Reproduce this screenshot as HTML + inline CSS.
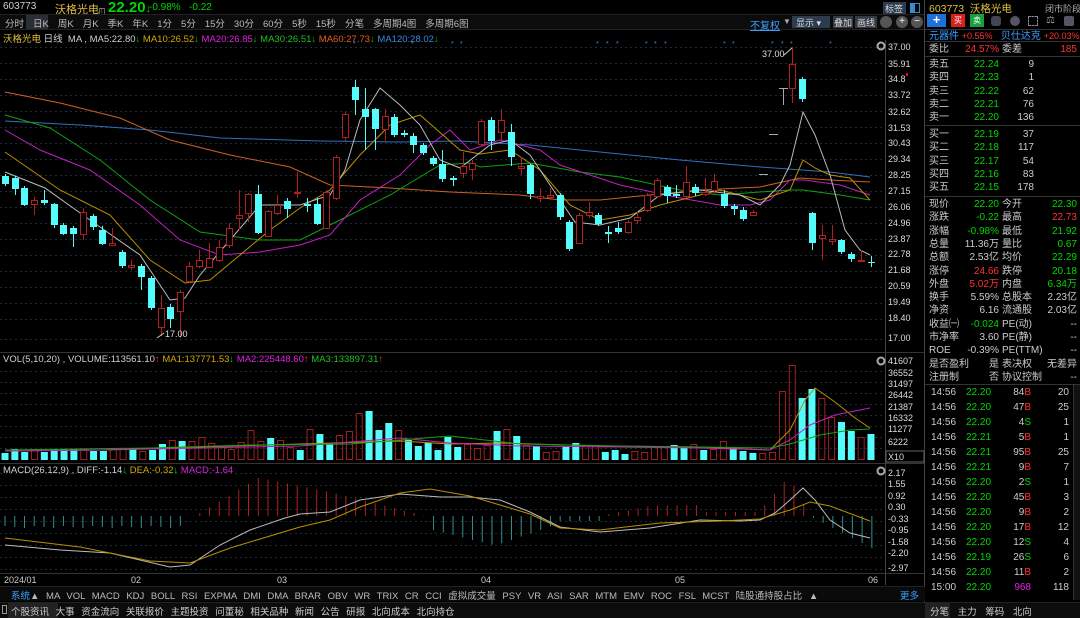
<!DOCTYPE html><html><head><meta charset="utf-8"><style>
*{margin:0;padding:0;box-sizing:border-box}
body{width:1080px;height:618px;background:#000;color:#c8c8c8;font-family:"Liberation Sans","Noto Sans CJK SC",sans-serif;font-size:10px;position:relative;overflow:hidden}
.a{position:absolute;white-space:nowrap}
.g{color:#00d600}.r{color:#ff3232}.y{color:#e0c040}.w{color:#d0d0d0}
.tab span{margin-right:9px}
.rp div.row{position:absolute;left:929px;width:148px;height:13px;font-size:10px;line-height:13px}
.rp .row b{font-weight:normal;position:absolute;top:0;line-height:13px}
</style></head><body>
<div class="a" style="left:0;top:0;width:925px;height:14px;background:#000"></div>
<div class="a w" style="left:3px;top:1px;font-size:10px">603773</div>
<div class="a y" style="left:55px;top:1px;font-size:11px">沃格光电<span style="font-size:6px;color:#888;border:1px solid #666">T</span></div>
<div class="a g" style="left:108px;top:-1px;font-size:15px;font-weight:bold">22.20<span style="font-size:11px">↓</span></div>
<div class="a g" style="left:149px;top:2px;font-size:10px">-0.98%&nbsp;&nbsp;&nbsp;-0.22</div>
<div class="a" style="left:0;top:14px;width:925px;height:16px;background:#0c0c0c;border-top:1px solid #222;border-bottom:1px solid #222"></div>
<div class="a" style="left:26px;top:15px;width:22px;height:14px;background:#2a2e36"></div>
<div class="a tab" style="left:5px;top:16px;font-size:9.5px;color:#bbb;word-spacing:0"><span>分时</span><span>日K</span><span>周K</span><span>月K</span><span>季K</span><span>年K</span><span>1分</span><span>5分</span><span>15分</span><span>30分</span><span>60分</span><span>5秒</span><span>15秒</span><span>分笔</span><span>多周期4图</span><span>多周期6图</span></div>
<div class="a" style="left:750px;top:17px;color:#3aa0ff;text-decoration:underline;font-size:10px">不复权</div>
<div class="a" style="left:783px;top:17px;color:#aaa;font-size:8px">▼</div>
<div class="a" style="left:792px;top:16px;width:38px;height:12px;background:#2d3b4f;color:#ddd;font-size:9px;padding-left:4px">显示 ▾</div>
<div class="a" style="left:833px;top:16px;width:20px;height:12px;background:#333a44;color:#ddd;font-size:9px;padding-left:1px">叠加</div>
<div class="a" style="left:855px;top:16px;width:22px;height:12px;background:#333a44;color:#ddd;font-size:9px;padding-left:2px">画线</div>
<div class="a" style="left:880px;top:16px;width:12px;height:12px;border-radius:6px;background:#555"></div>
<div class="a" style="left:896px;top:16px;width:12px;height:12px;border-radius:6px;background:#555;color:#fff;text-align:center;line-height:12px">+</div>
<div class="a" style="left:911px;top:16px;width:12px;height:12px;border-radius:6px;background:#555;color:#fff;text-align:center;line-height:11px">−</div>
<div class="a" style="left:883px;top:2px;width:23px;height:12px;background:#2d3b4f;color:#ddd;font-size:9px;padding-left:2px">标签</div>
<div class="a" style="left:910px;top:3px;width:10px;height:10px;border:1px solid #3a8ad0;border-left:5px solid #3a8ad0"></div>
<div class="a" style="left:3px;top:31px;font-size:9.5px"><span class="y">沃格光电</span> <span class="w">日线&nbsp; MA , MA5:22.80</span><span class="g">↓</span> <span style="color:#d4a800">MA10:26.52</span><span class="g">↓</span> <span style="color:#e020e0">MA20:26.85</span><span class="g">↓</span> <span style="color:#20c020">MA30:26.51</span><span class="g">↓</span> <span style="color:#e06020">MA60:27.73</span><span class="g">↓</span> <span style="color:#3a8ae0">MA120:28.02</span><span class="g">↓</span></div>
<div class="a" style="left:3px;top:354px;font-size:9.5px"><span class="w">VOL(5,10,20) , VOLUME:113561.10</span><span class="r">↑</span> <span style="color:#d4a800">MA1:137771.53</span><span class="g">↓</span> <span style="color:#e020e0">MA2:225448.60</span><span class="r">↑</span> <span style="color:#20c020">MA3:133897.31</span><span class="r">↑</span></div>
<div class="a" style="left:3px;top:465px;font-size:9.5px"><span class="w">MACD(26,12,9) , DIFF:-1.14</span><span class="g">↓</span> <span style="color:#d4a800">DEA:-0.32</span><span class="g">↓</span> <span style="color:#e020e0">MACD:-1.64</span></div>
<svg class="a" style="left:0;top:0" width="925" height="618" id="sv">
<g stroke="#1e2a3a" stroke-dasharray="2,3" stroke-width="1" id="grid"></g>
<line x1="0" y1="352.5" x2="925" y2="352.5" stroke="#333"/>
<line x1="0" y1="463.5" x2="925" y2="463.5" stroke="#333"/>
<line x1="0" y1="573.5" x2="925" y2="573.5" stroke="#333"/>
<line x1="885.5" y1="40" x2="885.5" y2="585" stroke="#444"/>
<line x1="924.5" y1="0" x2="924.5" y2="618" stroke="#444"/>
<g id="ma" fill="none" stroke-width="1"></g>
<g id="cd"></g>
<g id="vol"></g>
<g id="mc"></g>
<text x="165" y="337" fill="#ddd" font-size="9">17.00</text>
<polyline points="157,338 164,333" stroke="#ccc" fill="none"/>
<text x="762" y="57" fill="#ddd" font-size="9">37.00</text>
<polyline points="784,55 792,48" stroke="#ccc" fill="none"/>
<g fill="#ddd" font-size="9" id="ax"></g>
<g fill="#ccc" font-size="9"><text x="4" y="583">2024/01</text><text x="131" y="583">02</text><text x="277" y="583">03</text><text x="481" y="583">04</text><text x="675" y="583">05</text><text x="868" y="583">06</text></g>
<rect x="886" y="451" width="38" height="11" fill="none" stroke="#666"/><text x="888" y="460" fill="#ddd" font-size="9">X10</text>
<circle cx="881" cy="46" r="3.5" fill="none" stroke="#aaa" stroke-width="2"/><circle cx="881" cy="361" r="3.5" fill="none" stroke="#aaa" stroke-width="2"/><circle cx="881" cy="471" r="3.5" fill="none" stroke="#aaa" stroke-width="2"/>
<g fill="#3a8ae0" font-size="7" id="stars"></g>
</svg>
<div class="a" style="left:0;top:586px;width:925px;height:15px;background:#0a0a0a;border-top:1px solid #222"></div>
<div class="a" style="left:11px;top:588px;font-size:9.5px;color:#bbb;word-spacing:4px"><span style="color:#3aa0ff">系统</span>▲ MA VOL MACD KDJ BOLL RSI EXPMA DMI DMA BRAR OBV WR TRIX CR CCI 虚拟成交量 PSY VR ASI SAR MTM EMV ROC FSL MCST 陆股通持股占比 ▲</div>
<div class="a" style="left:900px;top:588px;color:#3aa0ff;font-size:9.5px">更多</div>
<div class="a" style="left:0;top:602px;width:1080px;height:16px;background:#0c0c0c;border-top:1px solid #222"></div>
<div class="a" style="left:8px;top:602px;width:50px;height:16px;background:#222"></div>
<div class="a" style="left:2px;top:605px;width:5px;height:9px;border:1px solid #999"></div>
<div class="a" style="left:11px;top:604px;font-size:9.5px;color:#ccc;word-spacing:4px">个股资讯 大事 资金流向 关联报价 主题投资 问董秘 相关品种 新闻 公告 研报 北向成本 北向持仓</div>
<div class="a" style="left:925px;top:602px;width:25px;height:16px;background:#222"></div>
<div class="a" style="left:930px;top:604px;font-size:9.5px;color:#ccc;word-spacing:6px">分笔 主力 筹码 北向</div>
<div class="a y" style="left:929px;top:1px;font-size:10.5px">603773&nbsp; 沃格光电</div>
<div class="a" style="left:1045px;top:2px;font-size:9px;color:#aaa">闭市阶段</div>
<div class="a" style="left:927px;top:14px;width:19px;height:13px;background:#1f6fd8;color:#fff;text-align:center;font-size:13px;line-height:12px;font-weight:bold">+</div>
<div class="a" style="left:951px;top:14px;width:14px;height:13px;background:#d82020;color:#fff;font-size:8px;text-align:center;line-height:13px">买</div>
<div class="a" style="left:970px;top:14px;width:14px;height:13px;background:#18a040;color:#fff;font-size:8px;text-align:center;line-height:13px">卖</div>
<div class="a" style="left:991px;top:16px;width:10px;height:10px;background:#445;border-radius:3px"></div>
<div class="a" style="left:1010px;top:16px;width:10px;height:10px;background:#556;border-radius:5px"></div>
<div class="a" style="left:1028px;top:16px;width:10px;height:10px;border:1px dashed #889"></div>
<div class="a" style="left:1046px;top:15px;color:#99a;font-size:10px">⚖</div>
<div class="a" style="left:1064px;top:16px;width:10px;height:10px;background:#556;border-radius:2px"></div>
<div class="a" style="left:925px;top:29px;width:155px;height:1px;background:#333"></div>
<div class="a" style="left:929px;top:31px;font-size:10px;line-height:11px"><span style="color:#3aa0ff">元器件</span> <span class="r" style="font-size:9px">+0.55%</span>&nbsp;&nbsp; <span style="color:#3aa0ff">贝仕达克</span> <span class="r" style="font-size:9px">+20.03%</span></div>
<div class="a" style="left:925px;top:41px;width:155px;height:1px;background:#333"></div>
<div class="a" style="left:925px;top:56px;width:155px;height:1px;background:#333"></div>
<div class="a" style="left:925px;top:125px;width:155px;height:1px;background:#333"></div>
<div class="a" style="left:925px;top:196px;width:155px;height:1px;background:#333"></div>
<div class="a" style="left:925px;top:384px;width:155px;height:1px;background:#333"></div>
<div class="a" style="left:1073px;top:385px;width:7px;height:215px;background:#111;border-left:1px solid #333"></div>
<div class="rp" id="rp"></div>
<script>
var NS="http://www.w3.org/2000/svg";
function el(p,t,a){var e=document.createElementNS(NS,t);for(var k in a)e.setAttribute(k,a[k]);document.getElementById(p).appendChild(e);return e}
[47,63,79,95,111,127,143,159,175,191,207,223,239,255,271,287,303,319,339].forEach(function(y){el('grid','line',{x1:0,x2:885,y1:y+.5,y2:y+.5})});
[371,382,393,404,415,426,437,448].forEach(function(y){el('grid','line',{x1:0,x2:885,y1:y+.5,y2:y+.5})});
[473,485,497,509,521,533,545,557,569].forEach(function(y){el('grid','line',{x1:0,x2:885,y1:y+.5,y2:y+.5})});
var ax=[["37.00",50],["35.91",67],["34.8",82],["33.72",98],["32.62",115],["31.53",131],["30.43",146],["29.34",162],["28.25",178],["27.15",194],["26.06",210],["24.96",226],["23.87",242],["22.78",257],["21.68",273],["20.59",289],["19.49",305],["18.40",321],["17.00",341],
["41607",364],["36552",376],["31497",387],["26442",398],["21387",410],["16332",421],["11277",432],["6222",445],
["2.17",476],["1.55",487],["0.92",499],["0.30",510],["-0.33",522],["-0.95",533],["-1.58",545],["-2.20",556],["-2.97",571]];
ax.forEach(function(a){var t=el('ax','text',{x:888,y:a[1]});t.textContent=a[0]});
el('ax','rect',{x:906,y:73,width:2,height:3,fill:"#f00"});
[355,413,453,462,598,608,618,647,656,666,725,734,773,783,792,831].forEach(function(x){var t=el('stars','text',{x:x-2,y:46});t.textContent="*"});
function pl(c,pts){el('ma','polyline',{points:pts,stroke:c})}
pl("#3070c0","5,121 80,125 150,130 220,138 320,141 400,142 460,141 530,145 600,152 680,160 760,167 830,172 870,177");
pl("#d06020","5,92 60,103 120,118 170,140 230,155 290,167 330,185 390,188 450,192 520,195 560,200 600,200 650,195 700,190 760,187 800,178 830,180 870,182");
pl("#10a010","5,115 50,128 100,160 150,200 200,232 260,240 300,240 340,220 390,195 440,165 470,163 480,167 530,163 580,172 620,177 680,190 720,195 760,192 790,190 803,190 840,195 870,200");
pl("#c020c0","5,130 40,150 90,170 140,205 180,240 220,255 260,252 300,245 330,235 360,200 400,175 430,145 450,130 470,150 500,140 540,150 560,165 620,185 680,198 720,205 750,205 770,200 790,180 805,180 840,185 870,195");
pl("#b89000","5,152 60,190 110,215 150,260 185,283 210,280 240,255 270,230 300,208 330,190 360,155 390,125 420,115 460,150 480,154 510,150 540,170 570,205 600,220 630,215 660,205 700,195 720,190 760,200 790,190 803,160 815,168 830,175 850,178 870,200");
pl("#bbbbbb","5,172 45,188 90,220 140,255 170,300 185,298 200,275 230,240 260,205 300,205 330,195 345,170 360,120 380,88 400,105 420,125 440,160 460,168 490,145 510,140 530,155 560,200 575,222 600,225 630,218 660,195 700,190 740,195 760,205 780,185 790,165 803,112 815,135 830,175 845,230 860,250 870,255");
var C=[[5,176,184,174,186,'c'],[15,178,189,176,195,'c'],[24,188,205,186,206,'c'],[34,200,204,197,215,'r'],[44,200,203,190,205,'c'],[54,204,225,203,228,'c'],[63,225,234,223,235,'c'],[73,228,234,226,247,'c'],[83,212,234,208,240,'r'],[93,216,227,214,230,'c'],[102,230,244,226,245,'c'],[112,243,245,228,246,'r'],[122,252,266,250,268,'c'],[131,265,267,260,270,'r'],[141,266,277,264,290,'c'],[151,278,308,276,310,'c'],[161,308,327,295,336,'r'],[170,307,319,304,328,'c'],[180,292,311,290,338,'r'],[189,266,281,262,283,'r'],[199,260,266,250,268,'r'],[209,258,267,243,268,'r'],[219,247,260,240,262,'r'],[229,228,245,223,248,'r'],[239,215,218,190,230,'r'],[248,194,213,193,222,'r'],[258,194,233,185,234,'c'],[268,211,236,210,237,'r'],[277,205,213,195,215,'r'],[287,201,209,198,218,'c'],[297,192,193,172,198,'r'],[307,204,206,198,212,'c'],[317,204,224,198,225,'c'],[326,192,228,190,229,'r'],[336,157,198,155,200,'r'],[345,114,137,112,141,'r'],[355,87,100,80,115,'c'],[365,109,117,88,150,'c'],[375,109,129,108,150,'c'],[385,116,129,109,142,'r'],[394,117,135,114,137,'c'],[404,133,135,130,137,'c'],[413,136,145,133,153,'c'],[423,145,153,143,155,'c'],[433,158,164,156,166,'c'],[442,164,179,150,182,'c'],[453,178,180,176,186,'c'],[463,166,173,152,178,'r'],[472,163,169,160,180,'r'],[481,121,144,119,146,'r'],[491,120,141,117,150,'c'],[501,120,132,109,140,'r'],[511,132,157,124,166,'c'],[521,166,168,157,175,'r'],[530,165,194,164,199,'c'],[540,196,198,188,202,'r'],[550,195,197,188,200,'r'],[560,195,217,193,220,'c'],[569,222,249,220,251,'c'],[579,215,243,213,244,'r'],[589,212,215,202,218,'r'],[598,215,224,213,226,'c'],[608,232,234,226,243,'c'],[618,228,232,222,234,'c'],[628,222,232,220,234,'r'],[637,217,220,212,224,'r'],[647,195,210,193,212,'r'],[657,180,196,178,198,'r'],[667,187,196,185,203,'c'],[676,194,196,185,198,'c'],[686,182,196,166,198,'r'],[695,187,193,184,196,'c'],[705,192,194,178,196,'r'],[714,181,190,174,194,'r'],[724,194,206,190,208,'c'],[734,206,209,204,215,'c'],[743,210,219,207,221,'c'],[753,212,215,210,216,'r'],[763,174,175,174,175,'g'],[773,134,135,134,135,'g'],[783,88,89,88,105,'g'],[792,64,88,47,103,'r'],[802,79,99,77,102,'c'],[812,213,243,212,250,'c'],[822,235,238,225,260,'r'],[832,239,241,225,245,'r'],[841,240,252,239,254,'c'],[851,254,259,252,262,'c'],[861,260,261,250,262,'r'],[871,262,263,256,267,'c']];
C.forEach(function(d){var x=d[0];var col=d[5]=='c'?'#54fcfc':d[5]=='r'?'#b02020':'#aaa';
el('cd','line',{x1:x+.5,x2:x+.5,y1:d[3],y2:d[4],stroke:col});
if(d[5]=='c')el('cd','rect',{x:x-3,y:d[1],width:7,height:Math.max(1,d[2]-d[1]),fill:col});
else if(d[5]=='r')el('cd','rect',{x:x-2.5,y:d[1]+.5,width:6,height:Math.max(1,d[2]-d[1]),fill:'#000',stroke:col});
else el('cd','line',{x1:x-4,x2:x+5,y1:d[1]+.5,y2:d[1]+.5,stroke:col});});
var V=[[453,'c'],[449,'c'],[452,'c'],[449,'r'],[452,'c'],[449,'c'],[449,'c'],[449,'c'],[449,'r'],[451,'c'],[451,'c'],[449,'r'],[449,'r'],[448,'c'],[451,'r'],[450,'c'],[444,'c'],[440,'r'],[441,'c'],[441,'r'],[437,'r'],[443,'r'],[447,'r'],[449,'r'],[442,'r'],[430,'r'],[441,'r'],[438,'c'],[440,'r'],[447,'r'],[450,'c'],[429,'r'],[434,'c'],[443,'c'],[435,'r'],[431,'r'],[413,'r'],[411,'c'],[430,'c'],[423,'c'],[430,'r'],[440,'c'],[446,'c'],[443,'c'],[450,'c'],[437,'c'],[447,'c'],[444,'r'],[448,'r'],[445,'r'],[431,'c'],[429,'r'],[436,'c'],[445,'r'],[446,'c'],[452,'r'],[451,'r'],[446,'c'],[443,'c'],[445,'r'],[445,'r'],[452,'c'],[450,'c'],[454,'c'],[451,'r'],[452,'r'],[447,'r'],[447,'r'],[445,'c'],[448,'c'],[444,'r'],[450,'c'],[449,'r'],[441,'r'],[447,'c'],[451,'c'],[453,'c'],[453,'r'],[452,'r'],[391,'r'],[365,'r'],[398,'c'],[389,'c'],[398,'r'],[417,'r'],[422,'c'],[431,'c'],[437,'r'],[434,'c']];
var n=V.length;V.forEach(function(v,i){var x=5+i*866/(n-1);
if(v[1]=='c')el('vol','rect',{x:x-3.5,y:v[0],width:7,height:460-v[0],fill:'#54fcfc'});
else el('vol','rect',{x:x-3,y:v[0]+.5,width:6,height:459-v[0],fill:'none',stroke:'#a02020'});});
el('vol','polyline',{points:"5,451 100,450 200,447 300,444 400,441 450,444 500,443 600,446 700,447 770,450 790,430 805,400 815,388 835,402 855,418 870,428",stroke:'#b89000',fill:'none'});
el('vol','polyline',{points:"5,451 100,450 200,448 300,446 400,438 450,443 520,446 620,447 700,448 770,450 790,440 810,425 835,415 870,408",stroke:'#c020c0',fill:'none'});
el('vol','polyline',{points:"5,450 150,448 250,445 350,444 450,436 520,444 620,446 700,447 770,448 790,444 820,435 850,430 870,429",stroke:'#10a010',fill:'none'});
var H=[];for(var i=0;i<90;i++){var x=5+i*9.74,v;
if(x<185)v=-(10+(i%3));else if(x<195)v=0;else if(x<260)v=(x-195)*0.6;else if(x<330)v=38-(x-260)*0.2;else if(x<425)v=24-(x-330)*0.25;else if(x<500)v=-12-(x-425)*0.25;else if(x<560)v=-28+(x-500)*0.35;else if(x<600)v=-5;else if(x<700)v=(x<650?(x-600)*0.2:10+((x-650)*0.02));else if(x<760)v=4;else if(x<790)v=(x-760)*1.2+5;else if(x<810)v=38-(x-790)*1.9;else v=-(x-810)*0.52;
H.push([x,v]);}
H.forEach(function(h){el('mc','line',{x1:h[0],x2:h[0],y1:516,y2:516-h[1],stroke:h[1]>0?'#b02020':'#309090'})});
el('mc','polyline',{points:"5,545 60,550 110,553 170,567 190,565 220,545 250,530 285,518 300,514 330,512 360,500 400,494 440,497 470,497 500,500 530,512 560,527 600,532 650,528 700,520 740,521 760,520 775,513 790,500 803,488 815,500 830,520 850,533 870,538",stroke:'#bbb',fill:'none'});
el('mc','polyline',{points:"5,538 80,547 150,561 190,563 230,548 270,536 300,527 330,520 360,507 400,493 430,489 470,496 500,505 530,514 560,528 600,530 660,523 720,521 760,519 790,510 810,502 830,506 870,521",stroke:'#b89000',fill:'none'});
var R=document.getElementById('rp');
function row(y,l,v,vc,l2,v2,v2c){R.insertAdjacentHTML('beforeend','<div class="row" style="top:'+y+'px"><b style="left:0;color:#ccc">'+l+'</b><b style="right:78px;color:'+vc+'">'+v+'</b><b style="left:73px;color:#ccc">'+(l2||'')+'</b><b style="right:0;color:'+v2c+'">'+(v2||'')+'</b></div>')}
var G='#00d600',Rd='#ff3232',W='#ccc';
row(43,'委比','24.57%',Rd,'委差','185',Rd);
var b=[['卖五','22.24','9'],['卖四','22.23','1'],['卖三','22.22','62'],['卖二','22.21','76'],['卖一','22.20','136'],['买一','22.19','37'],['买二','22.18','117'],['买三','22.17','54'],['买四','22.16','83'],['买五','22.15','178']];
b.forEach(function(q,i){var y=i<5?58+i*13.3:128+(i-5)*13.3;R.insertAdjacentHTML('beforeend','<div class="row" style="top:'+y+'px"><b style="left:0;color:#ccc">'+q[0]+'</b><b style="right:78px;color:'+G+'">'+q[1]+'</b><b style="right:43px;color:#ccc">'+q[2]+'</b></div>')});
var s=[['现价','22.20',G,'今开','22.30',G],['涨跌','-0.22',G,'最高','22.73',Rd],['涨幅','-0.98%',G,'最低','21.92',G],['总量','11.36万',W,'量比','0.67',G],['总额','2.53亿',W,'均价','22.29',G],['涨停','24.66',Rd,'跌停','20.18',G],['外盘','5.02万',Rd,'内盘','6.34万',G],['换手','5.59%',W,'总股本','2.23亿',W],['净资','6.16',W,'流通股','2.03亿',W],['收益㈠','-0.024',G,'PE(动)','--',W],['市净率','3.60',W,'PE(静)','--',W],['ROE','-0.39%',W,'PE(TTM)','--',W],['是否盈利','是',W,'表决权','无差异',W],['注册制','否',W,'协议控制','--',W]];
s.forEach(function(q,i){row(198+i*13.3,q[0],q[1],q[2],q[3],q[4],q[5])});
var t=[['14:56','22.20','84','B','20'],['14:56','22.20','47','B','25'],['14:56','22.20','4','S','1'],['14:56','22.21','5','B','1'],['14:56','22.21','95','B','25'],['14:56','22.21','9','B','7'],['14:56','22.20','2','S','1'],['14:56','22.20','45','B','3'],['14:56','22.20','9','B','2'],['14:56','22.20','17','B','12'],['14:56','22.20','12','S','4'],['14:56','22.19','26','S','6'],['14:56','22.20','11','B','2'],['15:00','22.20','968','','118']];
t.forEach(function(q,i){var y=386+i*15;var vc=q[3]==''?'#e020e0':'#ccc';R.insertAdjacentHTML('beforeend','<div class="row" style="top:'+y+'px;width:140px"><b style="left:2px;color:#ccc">'+q[0]+'</b><b style="left:37px;color:'+G+'">'+q[1]+'</b><b style="right:38px;color:'+vc+'">'+q[2]+'<span style="color:'+(q[3]=='B'?Rd:G)+'">'+q[3]+'</span></b><b style="right:0;color:#ccc">'+q[4]+'</b></div>')});
</script>
</body></html>
